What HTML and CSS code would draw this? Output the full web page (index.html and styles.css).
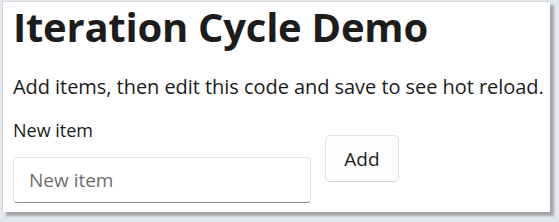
FILE: index.html
```html
<!DOCTYPE html>
<html>
<head>
<meta charset="utf-8">
<link rel="stylesheet" href="styles.css">
</head>
<body>
<div class="panel">
  <h1 class="title">Iteration Cycle Demo</h1>
  <p class="intro">Add items, then edit this code and save to see hot reload.</p>
  <div class="form-row">
    <div class="field">
      <label class="label" for="item">New item</label>
      <input class="input" id="item" type="text" placeholder="New item">
    </div>
    <button class="btn" type="button">Add</button>
  </div>
</div>
</body>
</html>
```
FILE: styles.css
```css
html, body {
  margin: 0;
  padding: 0;
  background: #e4e7ec;
  width: 559px;
  height: 222px;
  overflow: hidden;
}
.panel {
  box-sizing: border-box;
  margin: 1px 0 0 2px;
  width: 548px;
  height: 211px;
  background: #ffffff;
  border-left: 1px solid #cfd3da;
  border-top: 1px solid #d6d9df;
  box-shadow: 4px 4px 2px rgba(0, 0, 0, 0.28);
  padding: 0 0 0 10px;
  font-family: "Open Sans", sans-serif;
  color: #1b1b1b;
}
.title {
  margin: 0;
  font-size: 40px;
  line-height: 50px;
  font-weight: 700;
  color: #1c1c1c;
  letter-spacing: -0.25px;
}
.intro {
  margin: 22px 0 0 0;
  font-size: 20px;
  line-height: 26px;
  letter-spacing: -0.05px;
}
.form-row {
  display: flex;
  align-items: flex-start;
  gap: 14px;
  margin-top: 18px;
}
.field {
  display: flex;
  flex-direction: column;
}
.label {
  font-size: 18px;
  line-height: 24px;
  margin-bottom: 15px;
}
.input {
  box-sizing: border-box;
  width: 298px;
  height: 46px;
  border: 1px solid #e3e3e3;
  border-bottom: 1px solid #8c8c8c;
  border-radius: 4px;
  padding: 0 15px;
  font-family: "Open Sans", sans-serif;
  font-size: 19px;
  color: #1b1b1b;
  background: #fff;
  outline: none;
}
.input::placeholder {
  color: #6e6e6e;
}
.btn {
  box-sizing: border-box;
  margin-top: 17px;
  width: 74px;
  height: 47px;
  border: 1px solid #e2e2e2;
  border-bottom-color: #d2d2d2;
  border-radius: 5px;
  background: #fdfdfd;
  font-family: "Open Sans", sans-serif;
  font-size: 19px;
  color: #1b1b1b;
  padding: 0;
}
```
